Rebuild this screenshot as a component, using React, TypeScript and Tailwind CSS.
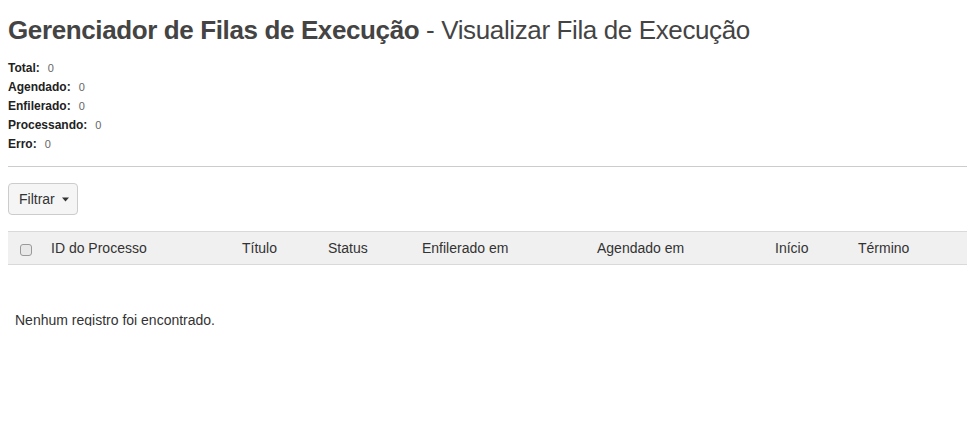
import React from "react";

const stats = [
  ["Total:", "0"],
  ["Agendado:", "0"],
  ["Enfilerado:", "0"],
  ["Processando:", "0"],
  ["Erro:", "0"],
];

const cols: [string, string][] = [
  ["ID do Processo", "w-[191px]"],
  ["Título", "w-[86px]"],
  ["Status", "w-[94px]"],
  ["Enfilerado em", "w-[175px]"],
  ["Agendado em", "w-[178px]"],
  ["Início", "w-[83px]"],
  ["Término", "flex-1"],
];

export default function App() {
  return (
    <div
      className="w-[975px] h-[432px] bg-white text-[#333] px-2 overflow-hidden"
      style={{ fontFamily: '"Liberation Sans", Arial, sans-serif' }}
    >
      <h1 className="pt-[14px] text-[26px] leading-[32px] text-[#444] tracking-[-0.38px] whitespace-nowrap">
        <span className="font-bold">Gerenciador de Filas de Execução</span>
        <span> - Visualizar Fila de Execução</span>
      </h1>
      <div className="mt-[13px] flex flex-col">
        {stats.map(([k, v]) => (
          <div key={k} className="h-[19px] leading-[19px] flex items-baseline">
            <span className="font-bold text-[12px] text-[#222]">{k}</span>
            <span className="ml-[8px] text-[11px] text-[#666]">{v}</span>
          </div>
        ))}
      </div>
      <div className="mt-[12px] border-t border-[#ccc]" />
      <div className="mt-[16px]">
        <button className="h-[32px] w-[70px] rounded-[4px] border border-[#ccc] bg-[#f5f5f5] text-[14px] text-[#333] flex items-center pl-[10px]">
          <span>Filtrar</span>
          <svg className="ml-[7px]" width="7" height="5" viewBox="0 0 7 5">
            <path d="M0 0.5 H7 L3.5 4.5 Z" fill="#333" />
          </svg>
        </button>
      </div>
      <div className="mt-[16px] h-[34px] bg-[#f0f0f0] border-t border-b border-[#d9d9d9] flex items-center text-[14px] text-[#333]">
        <div className="w-[43px] flex items-center pl-[12px]">
          <div className="w-[12px] h-[12px] mt-[3px] rounded-[3px] border border-[#999] bg-[#e8e8e8]" />
        </div>
        {cols.map(([c, w]) => (
          <div key={c} className={`${w} pt-[1px]`}>
            {c}
          </div>
        ))}
      </div>
      <div className="mt-[45px] pl-[7px] h-[16px] overflow-hidden text-[14px] leading-[20px] text-[#333]">
        Nenhum registro foi encontrado.
      </div>
    </div>
  );
}
